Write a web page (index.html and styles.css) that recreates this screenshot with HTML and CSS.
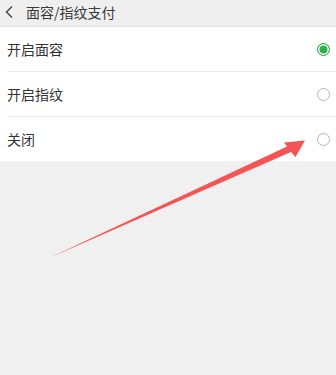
FILE: index.html
```html
<!DOCTYPE html>
<html lang="zh">
<head>
<meta charset="utf-8">
<link rel="stylesheet" href="styles.css">
</head>
<body>
<div class="page">
  <header class="topbar">
    <svg class="back" width="10" height="14" viewBox="0 0 10 14"><path d="M8 1.5 L2.5 7 L8 12.5" fill="none" stroke="#444" stroke-width="1.4"/></svg>
    <span class="title">面容/指纹支付</span>
  </header>
  <ul class="list">
    <li class="row"><span class="label">开启面容</span><span class="radio on"></span></li>
    <li class="row"><span class="label">开启指纹</span><span class="radio"></span></li>
    <li class="row last"><span class="label">关闭</span><span class="radio"></span></li>
  </ul>
  <svg class="arrow" width="336" height="375" viewBox="0 0 336 375">
    <path d="M49 258 L287 146.5 L284 142.5 L305 140.5 L295.5 157 L291 152 Z" fill="#f45454"/>
  </svg>
</div>
</body>
</html>
```
FILE: styles.css
```css
html, body { margin: 0; padding: 0; }
body { background: #f0f0f0; font-family: "Noto Sans CJK SC", "Noto Sans", sans-serif; }
.page { position: relative; width: 336px; height: 375px; overflow: hidden; }
.topbar { height: 26px; background: #efefef; border-bottom: 1px solid #e2e2e2; display: flex; align-items: center; padding-left: 4px; gap: 12px; }
.back { display: block; margin-top: -2px; }
.title { font-size: 14px; color: #3a3a3a; line-height: 1; margin-top: -2px; }
.list { list-style: none; margin: 0; padding: 0 0 0 7px; background: #fff; }
.row { height: 44px; display: flex; align-items: center; justify-content: space-between; border-bottom: 1px solid #ededed; padding-right: 6px; }
.row.last { border-bottom: none; height: 44px; }
.label { font-size: 14px; color: #333; }
.radio { width: 11px; height: 11px; border: 1.5px solid #b5b5b5; border-radius: 50%; box-sizing: content-box; }
.radio.on { border-color: #2eb04a; background: #2eb04a; box-shadow: inset 0 0 0 1.5px #fff; }
.arrow { position: absolute; left: 0; top: 0; }
```
